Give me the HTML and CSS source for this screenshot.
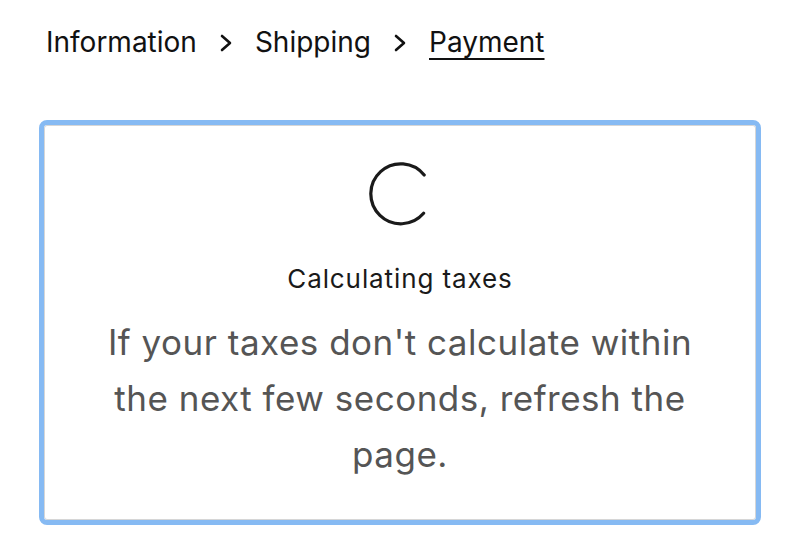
FILE: index.html
```html
<!DOCTYPE html>
<html lang="en">
<head>
  <meta charset="UTF-8">
  <title>Checkout - Payment</title>
  <meta name="viewport" content="width=device-width,initial-scale=1">
  <link rel="stylesheet" href="styles.css">
</head>
<body>
  <nav class="crumbs">
    <span class="crumb">Information</span>
    <svg class="chev" width="12" height="18" viewBox="0 0 12 18"><path d="M2 2l8 7-8 7" fill="none" stroke="#111" stroke-width="2.6" stroke-linecap="round" stroke-linejoin="round"/></svg>
    <span class="crumb">Shipping</span>
    <svg class="chev" width="12" height="18" viewBox="0 0 12 18"><path d="M2 2l8 7-8 7" fill="none" stroke="#111" stroke-width="2.6" stroke-linecap="round" stroke-linejoin="round"/></svg>
    <span class="crumb current">Payment</span>
  </nav>
  <div class="taxbox">
    <svg class="spinner" width="64" height="64" viewBox="0 0 64 64"><path d="M56.2 13A30 30 0 1 0 55.6 51.3" fill="none" stroke="#1a1a1a" stroke-width="3.2" stroke-linecap="round"/></svg>
    <div class="title">Calculating taxes</div>
    <p class="note">If your taxes don't calculate within the next few seconds, refresh the page.</p>
  </div>
</body>
</html>
```

FILE: styles.css
```css
body{margin:0;padding:24px 38px;background:#fff;font-family:Inter,"Liberation Sans",sans-serif;color:#111;}
.crumbs{display:flex;align-items:center;gap:23px;height:36px;margin-left:8px;}
.crumb{font-size:28px;line-height:36px;}
.chev{margin-top:2px;}
.crumb.current{text-decoration:underline;text-underline-offset:6px;text-decoration-thickness:1.5px;}
.taxbox{margin:65px 6px 0;border:1px solid #d6d6d6;outline:5px solid #86baf3;border-radius:3px;padding:36px 50px 37px;text-align:center;}
.spinner{display:block;margin:0 auto;}
.title{margin-top:38px;font-size:26px;line-height:30px;letter-spacing:0.9px;color:#1a1a1a;}
.note{margin:20px 0 0;font-size:35px;line-height:56px;letter-spacing:0.5px;color:#555;}
```
